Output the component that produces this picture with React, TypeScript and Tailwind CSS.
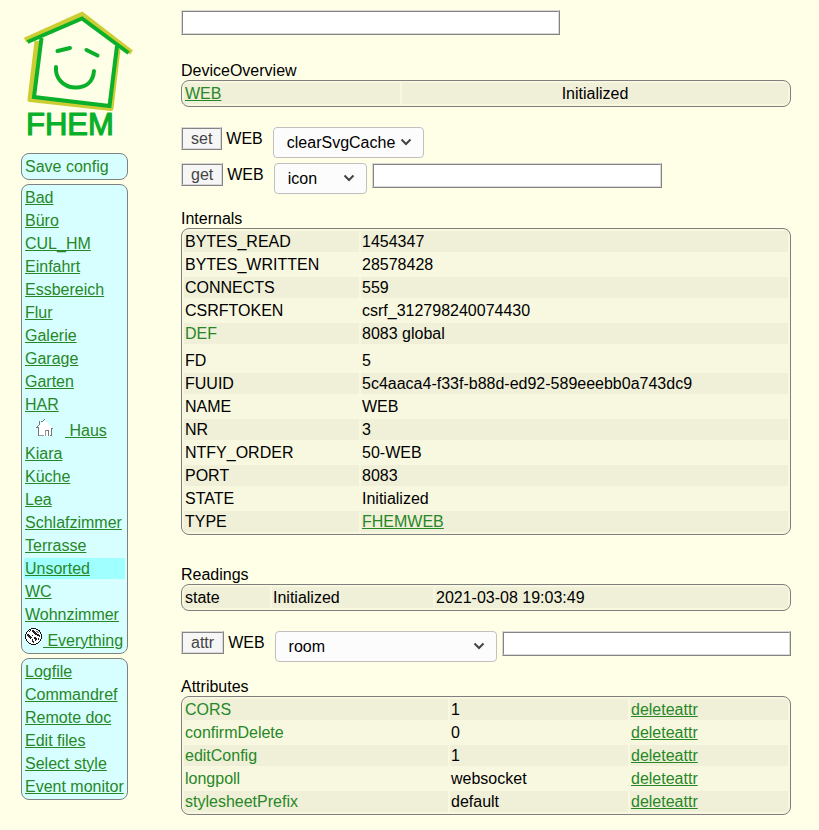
import React from "react";

const rooms = [
  "Bad", "Büro", "CUL_HM", "Einfahrt", "Essbereich", "Flur", "Galerie", "Garage", "Garten", "HAR",
  "Haus", "Kiara", "Küche", "Lea", "Schlafzimmer", "Terrasse", "Unsorted", "WC", "Wohnzimmer", "Everything",
];
const tools = ["Logfile", "Commandref", "Remote doc", "Edit files", "Select style", "Event monitor"];

const internals = [
  ["BYTES_READ", "1454347"],
  ["BYTES_WRITTEN", "28578428"],
  ["CONNECTS", "559"],
  ["CSRFTOKEN", "csrf_312798240074430"],
  ["DEF", "8083 global"],
  ["FD", "5"],
  ["FUUID", "5c4aaca4-f33f-b88d-ed92-589eeebb0a743dc9"],
  ["NAME", "WEB"],
  ["NR", "3"],
  ["NTFY_ORDER", "50-WEB"],
  ["PORT", "8083"],
  ["STATE", "Initialized"],
  ["TYPE", "FHEMWEB"],
];

const attributes = [
  ["CORS", "1"],
  ["confirmDelete", "0"],
  ["editConfig", "1"],
  ["longpoll", "websocket"],
  ["stylesheetPrefix", "default"],
];

const box = "border-separate border-spacing-[2px] rounded-lg border border-[#808080]";
const menuBox = box + " w-[107px] bg-[#d7ffff]";
const wideBox = box + " w-full table-fixed bg-[#f8f8e0]";
const odd = "bg-[#f0f0d8]";
const link = "text-[#278727] underline";
const field = "block h-[25px] min-w-0 border-2 border-[#d8d8d8] bg-white px-1 outline-none [border-style:ridge]";

function Logo() {
  return (
    <svg className="block h-[153px] w-28" viewBox="21 0 112 153" role="img" aria-label="FHEM">
      <g fill="none">
        <path d="M25 40L82 14.500L131.500 52.500" stroke="#cccc33" strokeWidth="5" />
        <path d="M37 41L30 99.500L111 108.500L118 49" stroke="#cccc33" strokeWidth="5" strokeLinejoin="round" />
        <path d="M27.500 42L82 18.500L128.500 53" stroke="#0ab02a" strokeWidth="4" />
        <path d="M41.500 38L34 97L109.500 106L117 46" stroke="#0ab02a" strokeWidth="4" />
        <g stroke="#0ab02a" strokeWidth="4" strokeLinecap="round">
          <path d="M57.500 51L70 48" />
          <path d="M86.500 50L97.500 55.500" />
          <path d="M56 67C55 78 63 87 74.500 87.500C86 88 93 82 94 71" />
        </g>
      </g>
      <text x="26" y="135" fill="#0ab02a" stroke="#0ab02a" strokeWidth="1.200" strokeLinejoin="round" fontFamily="Liberation Sans, sans-serif" fontSize="31">FHEM</text>
    </svg>
  );
}

function HouseIcon() {
  return (
    <svg className="mx-[11px] mt-px block h-[18px] w-[18px]" viewBox="0 0 18 18" shapeRendering="crispEdges" aria-hidden="true">
      <path d="M3 8L1 9V8L8 1L16 8V9H15V17H3Z" fill="#ffffff" />
      <path d="M0 8H1V7H2V6H3V2H6V3H5V2H4V6H3V7H2V8H1V9H0Z M6 2H7V1H8V0H9V1H8V2H7V3H6Z" fill="#777777" />
      <path d="M0 8H3V17H2V9H0Z M9 11H13V17H12V12H9Z M15 9H17V10H16V17H14V16H15Z" fill="#777777" />
      <path d="M9 11H10V17H9Z M3 16H8V17H3Z" fill="#999999" />
    </svg>
  );
}

function GlobeIcon() {
  return (
    <svg className="block h-[18px] w-[18px]" viewBox="0 0 18 18" shapeRendering="crispEdges" aria-hidden="true">
      <circle cx="8.500" cy="8.500" r="8" fill="#ffffff" />
      <path d="M6 0H11V1H6Z M4 1H6V2H4Z M11 1H13V2H11Z M3 2H4V3H3Z M13 2H15V3H13Z M2 3H3V4H2Z M14 3H15V4H14Z M1 4H2V6H1Z M15 4H16V6H15Z M0 6H1V11H0Z M16 6H17V11H16Z M1 11H2V13H1Z M15 11H16V13H15Z M2 13H3V14H2Z M14 13H15V14H14Z M3 14H4V15H3Z M13 14H14V15H13Z M4 15H6V16H4Z M11 15H13V16H11Z M6 16H11V17H6Z" fill="#111111" />
      <path d="M7 2H9V3H10V4H11V5H12V6H14V7H15V9H14V8H12V7H10V6H9V5H8V4H7Z M5 2H6V3H5V4H4V3H5Z M2 6H4V7H5V8H6V9H7V10H6V11H5V10H4V9H3V8H2Z M7 11H8V13H9V15H8V14H7Z M9 9H11V10H12V12H11V13H10V11H9Z M13 10H14V12H13Z M7 7H8V8H7Z" fill="#222222" />
      <path d="M11 3H13V4H14V5H12V4H11Z" fill="#888888" />
    </svg>
  );
}

function MenuLabel({ name }: { name: string }) {
  if (name === "Haus" || name === "Everything") {
    return (
      <a href="#" className="flex h-[22px] text-[#278727]">
        {name === "Haus" ? <HouseIcon /> : <GlobeIcon />}
        <span className="pt-[3px] underline">{"\u00a0" + name}</span>
      </a>
    );
  }
  return <a href="#" className={link}>{name}</a>;
}

function Menu({ items }: { items: string[] }) {
  return (
    <table className={menuBox}>
      <tbody>
        {items.map((name) => (
          <tr key={name}>
            <td className={"whitespace-nowrap p-px " + (name === "Unsorted" ? "bg-[#a0ffff]" : "")}>
              <MenuLabel name={name} />
            </td>
          </tr>
        ))}
      </tbody>
    </table>
  );
}

function Command({ name, option, width, input }: { name: string; option: string; width: string; input?: boolean }) {
  return (
    <form className="flex items-start" onSubmit={(e) => e.preventDefault()}>
      <button className="h-[23px] shrink-0 border-2 border-[#d8d8d8] bg-[#f6f6f6] px-2 text-[#444444] [border-style:ridge]">{name}</button>
      <label htmlFor={name + "-select"} className="ml-1 leading-[23px]">WEB</label>
      <div className={"relative ml-[10px] shrink-0 " + width}>
        <select id={name + "-select"} className="block h-[31px] w-full appearance-none rounded border border-[#c0c0c0] bg-[#fcfcfc] pl-[13px] text-black outline-none">
          <option>{option}</option>
        </select>
        <svg className="pointer-events-none absolute right-3 top-[11px] h-2 w-3" viewBox="0 0 12 8" fill="none" aria-hidden="true">
          <path d="M1.500 1.500L6 6L10.500 1.500" stroke="#444444" strokeWidth="2" />
        </svg>
      </div>
      {input && <input type="text" aria-label={name + " value"} className={field + " ml-[5px] w-[290px]"} />}
    </form>
  );
}

export default function App() {
  return (
    <div className="flex min-h-screen bg-[#ffffe7] pb-[15px] pl-[21px] pr-7 font-['Liberation_Sans',Arial,sans-serif] text-[16px] leading-[19px] text-black">
      <nav className="w-28 shrink-0">
        <Logo />
        <div className="flex flex-col gap-1">
          <table className={menuBox}>
            <tbody>
              <tr>
                <td className="p-px"><a href="#" className="text-[#278727]">Save config</a></td>
              </tr>
            </tbody>
          </table>
          <Menu items={rooms} />
          <Menu items={tools} />
        </div>
      </nav>

      <main className="ml-12 min-w-0 flex-1 pt-[10px]">
        <input type="text" aria-label="Command" className={field + " w-[379px] max-w-full"} />

        <h2 className="mt-[26px]">DeviceOverview</h2>
        <table className={wideBox}>
          <tbody>
            <tr className={odd}>
              <td className="w-[216px] p-px"><a href="#" className={link}>WEB</a></td>
              <td className="p-px text-center">Initialized</td>
            </tr>
          </tbody>
        </table>

        <div className="mt-5 flex flex-col gap-[5px]">
          <Command name="set" option="clearSvgCache" width="w-[151px]" />
          <Command name="get" option="icon" width="w-[93px]" input />
        </div>

        <h2 className="mt-[15px]">Internals</h2>
        <table className={wideBox}>
          <tbody>
            {internals.map(([key, value], i) => (
              <React.Fragment key={key}>
                <tr className={i % 2 === 0 ? odd : ""}>
                  <td className={"w-[175px] p-px " + (key === "DEF" ? "text-[#278727]" : "")}>{key}</td>
                  <td className="p-px">{key === "TYPE" ? <a href="#" className={link}>{value}</a> : value}</td>
                </tr>
                {key === "DEF" && (
                  <tr>
                    <td colSpan={2} className="p-px"></td>
                  </tr>
                )}
              </React.Fragment>
            ))}
          </tbody>
        </table>

        <h2 className="mt-[30px]">Readings</h2>
        <table className={wideBox}>
          <tbody>
            <tr className={odd}>
              <td className="w-[86px] p-px">state</td>
              <td className="w-[161px] p-px">Initialized</td>
              <td className="p-px">2021-03-08 19:03:49</td>
            </tr>
          </tbody>
        </table>

        <div className="mt-5">
          <Command name="attr" option="room" width="w-[222px]" input />
        </div>

        <h2 className="mt-[15px]">Attributes</h2>
        <table className={wideBox}>
          <tbody>
            {attributes.map(([key, value], i) => (
              <tr key={key} className={i % 2 === 0 ? odd : ""}>
                <td className="w-[264px] p-px text-[#278727]">{key}</td>
                <td className="w-[178px] p-px">{value}</td>
                <td className="p-px"><a href="#" className={link}>deleteattr</a></td>
              </tr>
            ))}
          </tbody>
        </table>
      </main>
    </div>
  );
}
